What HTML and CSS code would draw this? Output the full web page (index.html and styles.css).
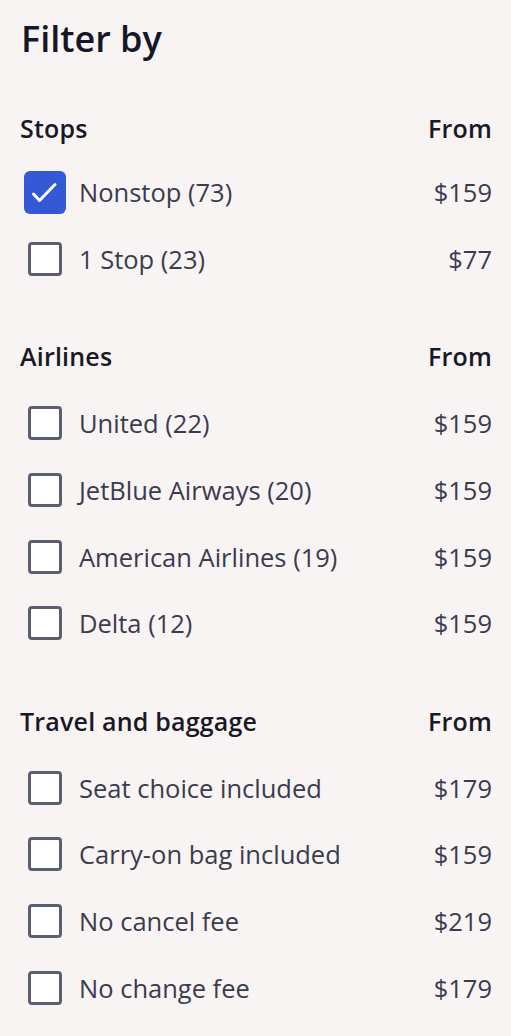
FILE: index.html
```html
<!DOCTYPE html>
<html lang="en">
<head>
<meta charset="utf-8">
<title>Filter by</title>
<link rel="stylesheet" href="styles.css">
</head>
<body>
<main class="panel">
  <h1 class="title">Filter by</h1>

  <section class="group">
    <div class="group-head"><span>Stops</span><span>From</span></div>
    <ul class="options">
      <li class="option">
        <span class="box checked"><svg viewBox="0 0 42 42" width="42" height="42"><path d="M9.5 23 L15.5 29.5 L31 13.5" fill="none" stroke="#fff" stroke-width="3" stroke-linecap="round" stroke-linejoin="round"/></svg></span>
        <span class="label">Nonstop (73)</span><span class="price">$159</span>
      </li>
      <li class="option"><span class="box"></span><span class="label">1 Stop (23)</span><span class="price">$77</span></li>
    </ul>
  </section>

  <section class="group">
    <div class="group-head"><span>Airlines</span><span>From</span></div>
    <ul class="options">
      <li class="option"><span class="box"></span><span class="label">United (22)</span><span class="price">$159</span></li>
      <li class="option"><span class="box"></span><span class="label">JetBlue Airways (20)</span><span class="price">$159</span></li>
      <li class="option"><span class="box"></span><span class="label">American Airlines (19)</span><span class="price">$159</span></li>
      <li class="option"><span class="box"></span><span class="label">Delta (12)</span><span class="price">$159</span></li>
    </ul>
  </section>

  <section class="group">
    <div class="group-head"><span>Travel and baggage</span><span>From</span></div>
    <ul class="options">
      <li class="option"><span class="box"></span><span class="label">Seat choice included</span><span class="price">$179</span></li>
      <li class="option"><span class="box"></span><span class="label">Carry-on bag included</span><span class="price">$159</span></li>
      <li class="option"><span class="box"></span><span class="label">No cancel fee</span><span class="price">$219</span></li>
      <li class="option"><span class="box"></span><span class="label">No change fee</span><span class="price">$179</span></li>
    </ul>
  </section>
</main>
</body>
</html>
```

FILE: styles.css
```css
html, body {
  margin: 0;
  padding: 0;
  background: #f8f4f3;
}

body {
  font-family: "Open Sans", "Noto Sans", sans-serif;
  color: #3b3b4e;
}

.panel {
  padding: 17px 19px 0 20px;
  display: flex;
  flex-direction: column;
}

.title {
  margin: 0 0 0 1px;
  font-size: 36px;
  font-weight: 600;
  line-height: 44px;
  color: #161726;
}

.group {
  display: flex;
  flex-direction: column;
  margin-top: 47px;
}

.group + .group {
  margin-top: 44px;
}

.group-head {
  display: flex;
  justify-content: space-between;
  align-items: center;
  height: 40px;
  font-size: 25px;
  font-weight: 600;
  letter-spacing: 0.2px;
  color: #181826;
}

.options {
  list-style: none;
  margin: 0;
  padding: 14px 0 0 0;
  display: flex;
  flex-direction: column;
}

.group:first-of-type .options {
  padding-top: 11px;
}

.option {
  display: flex;
  align-items: center;
  height: 66.6px;
  font-size: 25.5px;
}

.box {
  flex: none;
  width: 34px;
  height: 34px;
  box-sizing: border-box;
  border: 3px solid #5c5e70;
  border-radius: 4px;
  background: #fff;
  margin: 0 17px 0 8px;
  display: flex;
  align-items: center;
  justify-content: center;
}

.box.checked {
  width: 42px;
  height: 43px;
  margin: 0 13px 0 4px;
  border: none;
  border-radius: 6px;
  background: #3459d6;
}

.box svg {
  display: block;
}

.label {
  flex: 1;
  white-space: nowrap;
}

.price {
  flex: none;
  text-align: right;
}
```
